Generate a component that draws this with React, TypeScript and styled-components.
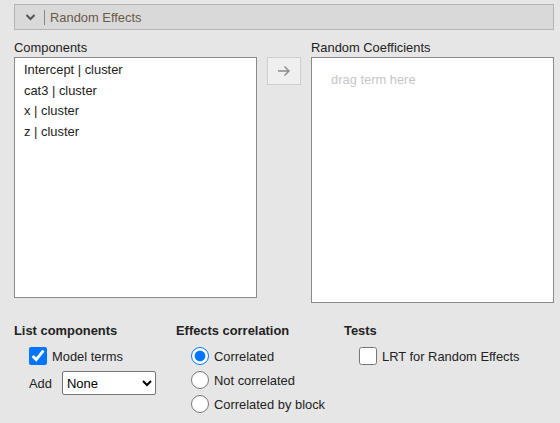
import React, { useState } from 'react';
import styled, { createGlobalStyle } from 'styled-components';

const GlobalStyle = createGlobalStyle`
  html, body {
    margin: 0;
    padding: 0;
    background: #e6e6e6;
  }
  body {
    font-family: "Liberation Sans", Arial, sans-serif;
    font-size: 13px;
    color: #222;
  }
`;

const components = ['Intercept | cluster', 'cat3 | cluster', 'x | cluster', 'z | cluster'];

function Chevron() {
  return (
    <svg width="11" height="8" viewBox="0 0 11 8">
      <path d="M1.5 2 L5.5 6 L9.5 2" fill="none" stroke="#555" strokeWidth="2" />
    </svg>
  );
}

function Arrow() {
  return (
    <svg width="14" height="12" viewBox="0 0 14 12">
      <path d="M1 6 H12 M7.5 1.5 L12 6 L7.5 10.5" fill="none" stroke="#8a8a8a" strokeWidth="1.4" />
    </svg>
  );
}

function App() {
  const [modelTerms, setModelTerms] = useState(true);
  const [corr, setCorr] = useState('corr');
  const [lrt, setLrt] = useState(false);

  return (
    <>
      <GlobalStyle />
      <Page>
        <Header>
          <Chevron />
          <Divider />
          <Title>Random Effects</Title>
        </Header>

        <Lists>
          <Column>
            <Label>Components</Label>
            <ListBox $height={241}>
              {components.map(c => <Item key={c}>{c}</Item>)}
            </ListBox>
          </Column>
          <ArrowButton type="button"><Arrow /></ArrowButton>
          <Column>
            <Label>Random Coefficients</Label>
            <ListBox $height={246}>
              <Placeholder>drag term here</Placeholder>
            </ListBox>
          </Column>
        </Lists>

        <Options>
          <Group $width={162}>
            <GroupTitle>List components</GroupTitle>
            <Option>
              <Check type="checkbox" checked={modelTerms} onChange={e => setModelTerms(e.target.checked)} />
              Model terms
            </Option>
            <AddRow>
              Add
              <Select defaultValue="None">
                <option>None</option>
              </Select>
            </AddRow>
          </Group>
          <Group $width={168}>
            <GroupTitle>Effects correlation</GroupTitle>
            <Option>
              <Radio type="radio" name="corr" checked={corr === 'corr'} onChange={() => setCorr('corr')} />
              Correlated
            </Option>
            <Option>
              <Radio type="radio" name="corr" checked={corr === 'not'} onChange={() => setCorr('not')} />
              Not correlated
            </Option>
            <Option>
              <Radio type="radio" name="corr" checked={corr === 'block'} onChange={() => setCorr('block')} />
              Correlated by block
            </Option>
          </Group>
          <Group>
            <GroupTitle>Tests</GroupTitle>
            <Option>
              <Check type="checkbox" checked={lrt} onChange={e => setLrt(e.target.checked)} />
              LRT for Random Effects
            </Option>
          </Group>
        </Options>
      </Page>
    </>
  );
}

const Page = styled.div`
  width: 540px;
  padding: 4px 6px 0 14px;
  display: flex;
  flex-direction: column;
  font-size: 12.9px;
`;

const Header = styled.div`
  height: 24px;
  border: 1px solid #b4b4b4;
  background: #d9d9d9;
  display: flex;
  align-items: center;
  padding-left: 10px;
`;

const Divider = styled.span`
  width: 1px;
  height: 15px;
  background: #8a8a8a;
  margin: 0 5px 0 8px;
`;

const Title = styled.span`
  color: #6a5a4a;
`;

const Lists = styled.div`
  display: grid;
  grid-template-columns: 243px 34px 243px;
  column-gap: 10px;
  margin-top: 10px;
`;

const Column = styled.div`
  display: flex;
  flex-direction: column;
`;

const Label = styled.div`
  height: 17px;
  line-height: 15px;
`;

const ListBox = styled.div<{ $height: number }>`
  height: ${p => p.$height}px;
  box-sizing: border-box;
  background: #fff;
  border: 1px solid #8a8a8a;
  padding: 2px 0 0 9px;
`;

const Item = styled.div`
  height: 20.7px;
  line-height: 20px;
`;

const Placeholder = styled.div`
  color: #c6c6c6;
  padding: 12px 0 0 10px;
`;

const ArrowButton = styled.button`
  margin-top: 17px;
  width: 34px;
  height: 28px;
  padding: 0;
  background: #efefef;
  border: 1px solid #cfcfcf;
  display: flex;
  align-items: center;
  justify-content: center;
`;

const Options = styled.div`
  display: flex;
  margin-top: 20px;
`;

const Group = styled.div<{ $width?: number }>`
  width: ${p => (p.$width ? `${p.$width}px` : 'auto')};
  display: flex;
  flex-direction: column;
`;

const GroupTitle = styled.div`
  font-weight: bold;
  height: 16px;
  line-height: 16px;
  margin-bottom: 5px;
`;

const Option = styled.label`
  display: flex;
  align-items: center;
  height: 24px;
  padding-left: 15px;
`;

const Check = styled.input`
  width: 18px;
  height: 18px;
  margin: 0 5px 0 0;
  accent-color: #0075ff;
`;

const Radio = styled.input`
  width: 18px;
  height: 18px;
  margin: 0 5px 0 0;
`;

const AddRow = styled.div`
  display: flex;
  align-items: center;
  gap: 10px;
  padding-left: 15px;
  margin-top: 3px;
`;

const Select = styled.select`
  width: 94px;
  height: 24px;
  font-family: "Liberation Sans", Arial, sans-serif;
  font-size: 13px;
  background: #fff;
  border: 1px solid #767676;
  border-radius: 2px;
`;

export default App;
